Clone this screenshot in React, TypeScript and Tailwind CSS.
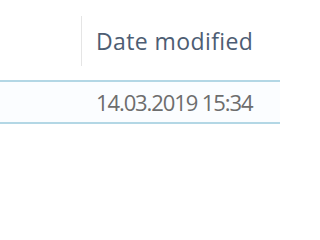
export default function App() {
  return (
    <div className="h-[210px] w-[280px] overflow-hidden bg-white font-['Open_Sans',sans-serif]">
      {/* column header */}
      <div className="flex h-[80px] items-start pt-[16px]">
        <div className="w-[81px]" />
        <div className="flex h-[50px] items-center border-l border-[#e5e5e5] pl-[14px]">
          <span className="text-[23px] leading-none tracking-[0.4px] text-[#4d5d73]">Date modified</span>
        </div>
      </div>
      {/* selected row */}
      <div className="flex h-[44px] items-center border-y-2 border-[#b3d7e5] bg-[#fbfdff]">
        <div className="w-[82px]" />
        <span className="pl-[14px] text-[22px] leading-none tracking-[-1.1px] text-[#6d6d6d]">14.03.2019 15:34</span>
      </div>
    </div>
  );
}
